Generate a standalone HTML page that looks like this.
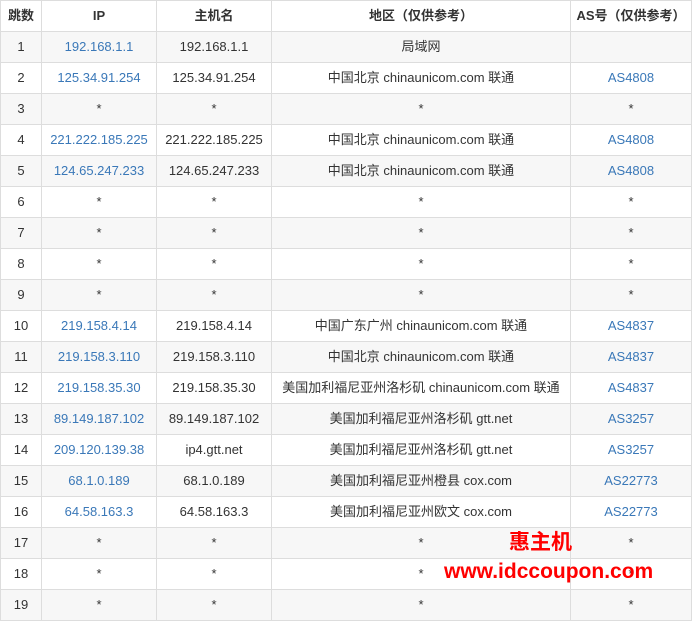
<!DOCTYPE html><html><head><meta charset="utf-8"><style>
body{margin:0;background:#fff;font-family:"Liberation Sans","Noto Sans CJK SC",sans-serif;font-size:13px;color:#333}
table{border-collapse:collapse;width:691px;table-layout:fixed;position:absolute;left:0;top:0}
td,th{border:1px solid #ddd;height:30px;padding:0;text-align:center;white-space:nowrap;overflow:hidden;line-height:16px;vertical-align:middle}
td span,th span{display:inline-block;line-height:16px}
th{font-weight:bold}
tr:nth-child(even) td{background:#f7f7f7}
.l{color:#3a78b8}
.wm{position:absolute;color:#f00;font-weight:bold;font-size:21px;line-height:24px;font-family:"Liberation Sans","Noto Sans CJK SC",sans-serif}
</style></head><body>
<table>
<colgroup><col style="width:41px"><col style="width:115px"><col style="width:115px"><col style="width:299px"><col style="width:121px"></colgroup>
<tr><th>跳数</th><th>IP</th><th>主机名</th><th>地区（仅供参考）</th><th>AS号（仅供参考）</th></tr>
<tr><td>1</td><td class="l">192.168.1.1</td><td>192.168.1.1</td><td>局域网</td><td></td></tr>
<tr><td>2</td><td class="l">125.34.91.254</td><td>125.34.91.254</td><td>中国北京 chinaunicom.com 联通</td><td class="l">AS4808</td></tr>
<tr><td>3</td><td>*</td><td>*</td><td>*</td><td>*</td></tr>
<tr><td>4</td><td class="l">221.222.185.225</td><td>221.222.185.225</td><td>中国北京 chinaunicom.com 联通</td><td class="l">AS4808</td></tr>
<tr><td>5</td><td class="l">124.65.247.233</td><td>124.65.247.233</td><td>中国北京 chinaunicom.com 联通</td><td class="l">AS4808</td></tr>
<tr><td>6</td><td>*</td><td>*</td><td>*</td><td>*</td></tr>
<tr><td>7</td><td>*</td><td>*</td><td>*</td><td>*</td></tr>
<tr><td>8</td><td>*</td><td>*</td><td>*</td><td>*</td></tr>
<tr><td>9</td><td>*</td><td>*</td><td>*</td><td>*</td></tr>
<tr><td>10</td><td class="l">219.158.4.14</td><td>219.158.4.14</td><td>中国广东广州 chinaunicom.com 联通</td><td class="l">AS4837</td></tr>
<tr><td>11</td><td class="l">219.158.3.110</td><td>219.158.3.110</td><td>中国北京 chinaunicom.com 联通</td><td class="l">AS4837</td></tr>
<tr><td>12</td><td class="l">219.158.35.30</td><td>219.158.35.30</td><td>美国加利福尼亚州洛杉矶 chinaunicom.com 联通</td><td class="l">AS4837</td></tr>
<tr><td>13</td><td class="l">89.149.187.102</td><td>89.149.187.102</td><td>美国加利福尼亚州洛杉矶 gtt.net</td><td class="l">AS3257</td></tr>
<tr><td>14</td><td class="l">209.120.139.38</td><td>ip4.gtt.net</td><td>美国加利福尼亚州洛杉矶 gtt.net</td><td class="l">AS3257</td></tr>
<tr><td>15</td><td class="l">68.1.0.189</td><td>68.1.0.189</td><td>美国加利福尼亚州橙县 cox.com</td><td class="l">AS22773</td></tr>
<tr><td>16</td><td class="l">64.58.163.3</td><td>64.58.163.3</td><td>美国加利福尼亚州欧文 cox.com</td><td class="l">AS22773</td></tr>
<tr><td>17</td><td>*</td><td>*</td><td>*</td><td>*</td></tr>
<tr><td>18</td><td>*</td><td>*</td><td>*</td><td>*</td></tr>
<tr><td>19</td><td>*</td><td>*</td><td>*</td><td>*</td></tr>
</table>
<div class="wm" style="left:509px;top:531px">惠主机</div>
<div class="wm" style="left:444px;top:560px">www.idccoupon.com</div>
</body></html>
